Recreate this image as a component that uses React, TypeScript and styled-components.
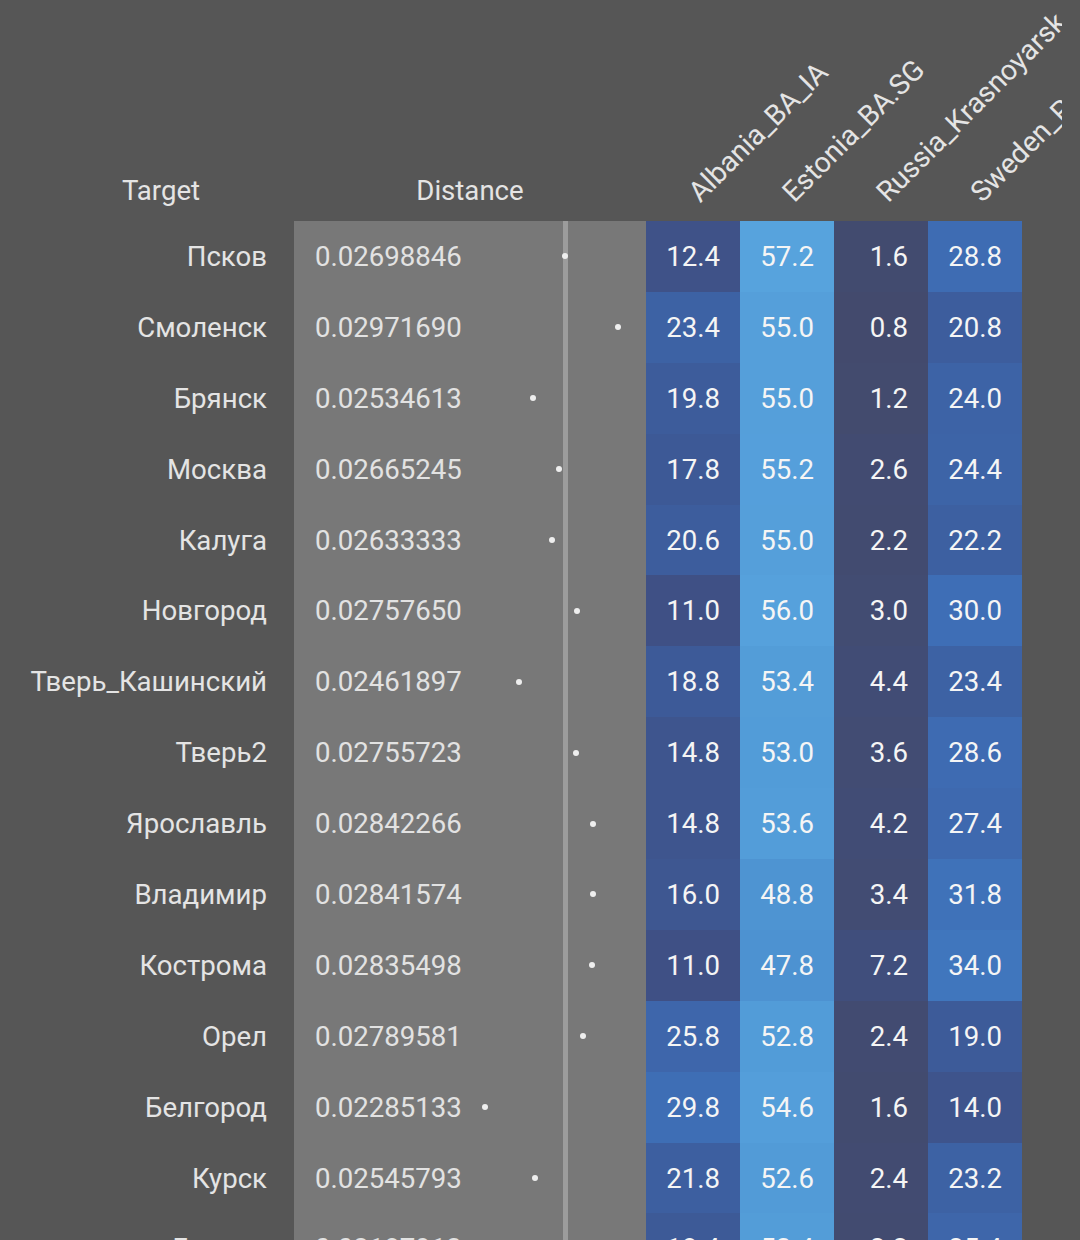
import styled, { createGlobalStyle } from "styled-components";

const GlobalStyle = createGlobalStyle`
  html, body {
    margin: 0;
    padding: 0;
    background: #565656;
  }
  body {
    font-family: Roboto, "Noto Sans", "Liberation Sans", sans-serif;
  }
`;

const COLUMNS = "294px 352px repeat(4, 94px)";
const ROW_HEIGHT = 70.9;

type Row = {
  name: string;
  distance: string;
  values: number[];
};

const rows: Row[] = [
  { name: "Псков", distance: "0.02698846", values: [12.4, 57.2, 1.6, 28.8] },
  { name: "Смоленск", distance: "0.02971690", values: [23.4, 55.0, 0.8, 20.8] },
  { name: "Брянск", distance: "0.02534613", values: [19.8, 55.0, 1.2, 24.0] },
  { name: "Москва", distance: "0.02665245", values: [17.8, 55.2, 2.6, 24.4] },
  { name: "Калуга", distance: "0.02633333", values: [20.6, 55.0, 2.2, 22.2] },
  { name: "Новгород", distance: "0.02757650", values: [11.0, 56.0, 3.0, 30.0] },
  { name: "Тверь_Кашинский", distance: "0.02461897", values: [18.8, 53.4, 4.4, 23.4] },
  { name: "Тверь2", distance: "0.02755723", values: [14.8, 53.0, 3.6, 28.6] },
  { name: "Ярославль", distance: "0.02842266", values: [14.8, 53.6, 4.2, 27.4] },
  { name: "Владимир", distance: "0.02841574", values: [16.0, 48.8, 3.4, 31.8] },
  { name: "Кострома", distance: "0.02835498", values: [11.0, 47.8, 7.2, 34.0] },
  { name: "Орел", distance: "0.02789581", values: [25.8, 52.8, 2.4, 19.0] },
  { name: "Белгород", distance: "0.02285133", values: [29.8, 54.6, 1.6, 14.0] },
  { name: "Курск", distance: "0.02545793", values: [21.8, 52.6, 2.4, 23.2] },
  { name: "Липецк", distance: "0.02187913", values: [18.4, 53.4, 2.2, 25.4] },
];

const populations = ["Albania_BA_IA", "Estonia_BA.SG", "Russia_Krasnoyarsk", "Sweden_P"];

// colour scale for the heatmap, dark slate -> light blue
const stops: [number, number[]][] = [
  [0, [67, 74, 107]],
  [10, [63, 79, 130]],
  [20, [61, 92, 155]],
  [30, [62, 110, 182]],
  [40, [68, 130, 199]],
  [50, [79, 151, 212]],
  [58, [88, 164, 222]],
];

const heatColor = (v: number) => {
  for (let i = 1; i < stops.length; i++) {
    const [x1, c1] = stops[i];
    const [x0, c0] = stops[i - 1];
    if (v <= x1 || i === stops.length - 1) {
      const t = Math.min(1, Math.max(0, (v - x0) / (x1 - x0)));
      const c = c0.map((a, k) => Math.round(a + (c1[k] - a) * t));
      return `rgb(${c[0]}, ${c[1]}, ${c[2]})`;
    }
  }
  return "#000";
};

// dot position inside the distance column
const dotLeft = (d: string) => 191 + (parseFloat(d) - 0.02285133) * 19372;

const Page = styled.div`
  width: 1080px;
  height: 1240px;
  overflow: hidden;
  background: #565656;
  color: #e4e4e4;
  font-size: 27.6px;
`;

const HeaderRow = styled.div`
  display: grid;
  grid-template-columns: ${COLUMNS};
  width: 1062px;
  height: 221px;
  overflow: hidden;
`;

const HeadCell = styled.div<{ $padLeft?: number }>`
  display: flex;
  align-items: flex-end;
  justify-content: center;
  padding-left: ${(p) => p.$padLeft ?? 0}px;
  padding-bottom: 14px;
  line-height: 32px;
`;

const RotatedCell = styled.div`
  position: relative;
`;

const RotatedLabel = styled.span`
  position: absolute;
  left: 58px;
  bottom: 14px;
  font-size: 28.4px;
  line-height: 1;
  white-space: nowrap;
  transform-origin: 0 100%;
  transform: rotate(-45deg);
`;

const Body = styled.div`
  display: flex;
  flex-direction: column;
`;

const DataRow = styled.div`
  display: grid;
  grid-template-columns: ${COLUMNS};
  height: ${ROW_HEIGHT}px;
  flex-shrink: 0;
`;

const NameCell = styled.div`
  display: flex;
  align-items: center;
  justify-content: flex-end;
  padding-right: 27px;
  white-space: nowrap;
`;

const DistanceCell = styled.div`
  position: relative;
  display: flex;
  align-items: center;
  padding-left: 21px;
  background: #787878;
  color: #e2e2e2;

  &::after {
    content: "";
    position: absolute;
    left: 269px;
    top: 0;
    bottom: 0;
    width: 5px;
    background: #9c9c9c;
  }
`;

const Dot = styled.span`
  position: absolute;
  top: 50%;
  width: 6px;
  height: 6px;
  border-radius: 50%;
  background: #eeeeee;
  transform: translate(-50%, -50%);
  z-index: 1;
`;

const HeatCell = styled.div<{ $bg: string }>`
  display: flex;
  align-items: center;
  justify-content: flex-end;
  padding-right: 20px;
  background: ${(p) => p.$bg};
  color: #f5f5f5;
`;

export default function App() {
  return (
    <>
      <GlobalStyle />
      <Page>
        <HeaderRow>
          <HeadCell $padLeft={28}>Target</HeadCell>
          <HeadCell>Distance</HeadCell>
          {populations.map((p) => (
            <RotatedCell key={p}>
              <RotatedLabel>{p}</RotatedLabel>
            </RotatedCell>
          ))}
        </HeaderRow>
        <Body>
          {rows.map((r) => (
            <DataRow key={r.name}>
              <NameCell>{r.name}</NameCell>
              <DistanceCell>
                {r.distance}
                <Dot style={{ left: dotLeft(r.distance) }} />
              </DistanceCell>
              {r.values.map((v, i) => (
                <HeatCell key={i} $bg={heatColor(v)}>
                  {v.toFixed(1)}
                </HeatCell>
              ))}
            </DataRow>
          ))}
        </Body>
      </Page>
    </>
  );
}
